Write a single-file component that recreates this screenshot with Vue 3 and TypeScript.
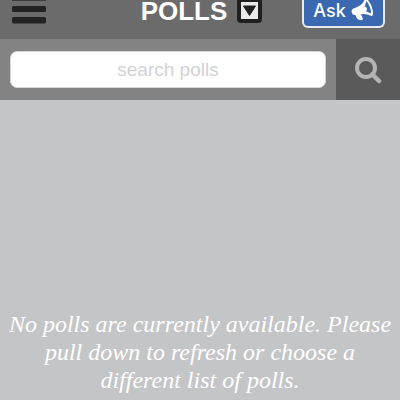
<script setup lang="ts">
import { ref } from 'vue'

const query = ref<string>('')
const message = 'No polls are currently available. Please pull down to refresh or choose a different list of polls.'
</script>

<template>
  <div class="app">
    <header class="bar">
      <button class="plain menu" type="button" aria-label="Menu">
        <svg width="34" height="24" viewBox="0 0 34 24">
          <rect width="34" height="1" fill="#3c3c3c" />
          <rect y="6" width="34" height="6" rx="1.5" fill="#222" />
          <rect y="17" width="34" height="6.500" rx="1.5" fill="#222" />
        </svg>
      </button>
      <div class="heading">
        <h1>POLLS</h1>
        <button class="plain" type="button" aria-label="Choose list">
          <svg width="25" height="23" viewBox="0 0 25 23">
            <path d="M0 0H25V19Q25 23 21 23H4Q0 23 0 19Z" fill="#202020" />
            <path d="M4 2H21V19H4Z" fill="#e9e9e9" />
            <path d="M6.500 6H18.500L12.500 15.500Z" fill="#202020" stroke="#202020" stroke-linejoin="round" />
          </svg>
        </button>
      </div>
      <button class="ask" type="button">
        <span>Ask</span>
        <svg width="23" height="22" viewBox="0 0 23 22" aria-hidden="true">
          <path d="M13.500 0Q11 6 2.500 8.500Q0 10 .8 12.500Q1.500 15.500 4.500 15Q5 18.500 8.500 20Q11 20.500 12.200 19L11 17.500L11.300 16.500L9.500 14.500Q14.500 13 20.500 16Q22.800 15.500 21.800 10.500Q20.500 4 17 0Z" fill="#fff" />
          <path d="M15.500 1Q14.500 4.500 13.500 6.500Q15.500 6.500 16 8.500Q16.300 10.500 14.800 11.300Q17.500 12 19.800 13.500Q20.500 11 18.800 7Q17.200 3 15.500 1Z" fill="#3a69b2" />
        </svg>
      </button>
    </header>

    <form class="search" role="search" @submit.prevent>
      <div class="field">
        <input v-model="query" type="text" placeholder="search polls" aria-label="search polls" />
      </div>
      <button class="go" type="submit" aria-label="Search">
        <svg width="28" height="28" viewBox="0 0 28 28">
          <circle cx="12" cy="12" r="9" fill="none" stroke="#b4b4b4" stroke-width="4" />
          <path d="M18.500 18.500L25 25" fill="none" stroke="#b4b4b4" stroke-width="4.500" stroke-linecap="round" />
        </svg>
      </button>
    </form>

    <main class="empty">
      <p>{{ message }}</p>
    </main>
  </div>
</template>

<style>
body {
  background: #c4c5c7;
}
</style>

<style scoped>
.app {
  display: flex;
  flex-direction: column;
  min-height: 100vh;
  box-sizing: border-box;
  background: #c4c5c7;
  font-family: "Liberation Sans", Arial, sans-serif;
}
button {
  border: 0;
  padding: 0;
  font: inherit;
  cursor: pointer;
}
svg {
  display: block;
}
.plain {
  background: none;
}
.bar {
  display: grid;
  grid-template-columns: 1fr auto 1fr;
  align-items: start;
  height: 39px;
  padding: 0 15px 0 18px;
  background: #6b6b6b;
}
.menu {
  justify-self: start;
  margin-left: -6px;
}
.heading {
  display: flex;
  gap: 10px;
}
h1 {
  margin: 0;
  color: #fff;
  font-size: 26px;
  font-weight: 700;
  line-height: 22px;
}
.ask {
  justify-self: end;
  display: flex;
  justify-content: center;
  gap: 5px;
  box-sizing: border-box;
  width: 83px;
  height: 28px;
  border: 2px solid #e8eaee;
  border-top: 0;
  border-radius: 0 0 6px 6px;
  background: #3a69b2;
  color: #fff;
  font-family: Inter, "Liberation Sans", sans-serif;
  font-size: 18px;
  font-weight: 500;
  line-height: 22px;
}
.search {
  display: flex;
  height: 61px;
  background: #838383;
}
.field {
  display: flex;
  flex: 1;
  min-width: 0;
  padding: 12px 10px;
}
input {
  flex: 1;
  min-width: 0;
  border: 1px solid #d4d4d4;
  border-radius: 7px;
  padding: 0 8px;
  background: #fff;
  color: #555;
  font: 19px "Liberation Sans", Arial, sans-serif;
  text-align: center;
}
input::placeholder {
  color: #d2d2d7;
  opacity: 1;
}
.go {
  display: flex;
  align-items: center;
  justify-content: center;
  width: 64px;
  background: #5a5a5a;
}
.empty {
  display: flex;
  flex: 1;
  align-items: flex-end;
  justify-content: center;
}
p {
  margin: 0;
  padding: 0 4px 6px;
  color: #fff;
  font: italic 24px/28px "Palatino Linotype", Palatino, "Liberation Serif", serif;
  text-align: center;
}
</style>
